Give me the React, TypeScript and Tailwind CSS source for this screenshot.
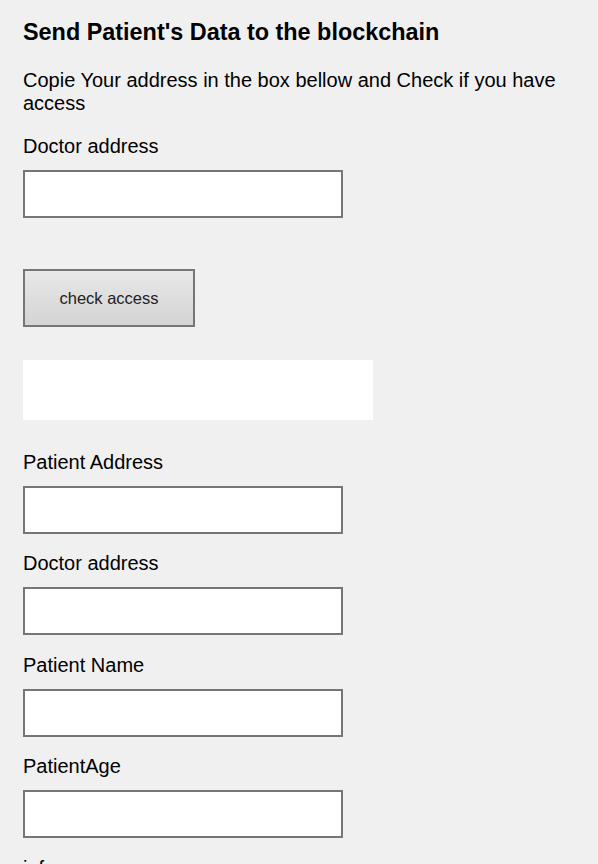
import React from 'react';

const Field: React.FC<{ label: string; className?: string }> = ({ label, className = '' }) => (
  <div className={className}>
    <label className="block text-[20px] leading-[23px] mb-3">{label}</label>
    <input type="text" className="block w-[320px] h-[48px] bg-white border-2 border-[#767676] outline-none" />
  </div>
);

export default function App() {
  return (
    <div className="min-h-[864px] bg-[#f0f0f0] text-black font-['Liberation_Sans',Arial,sans-serif] px-[23px] pt-[19px]">
      <h2 className="text-[23.4px] leading-[27px] font-bold">Send Patient's Data to the blockchain</h2>
      <p className="mt-[23px] text-[20px] leading-[23px]">
        Copie Your address in the box bellow and Check if you have access
      </p>
      <Field label="Doctor address" className="mt-[20px]" />
      <button className="mt-[51px] block w-[172px] h-[58px] border-2 border-[#767676] bg-gradient-to-b from-[#e8e8e8] to-[#d4d4d4] text-[16.5px] text-[#222]">
        check access
      </button>
      <div className="mt-[33px] w-[350px] h-[60px] bg-white" />
      <div className="mt-[31px] flex flex-col gap-[18.4px]">
        <Field label="Patient Address" />
        <Field label="Doctor address" />
        <Field label="Patient Name" />
        <Field label="PatientAge" />
        <Field label="infos" />
      </div>
    </div>
  );
}
